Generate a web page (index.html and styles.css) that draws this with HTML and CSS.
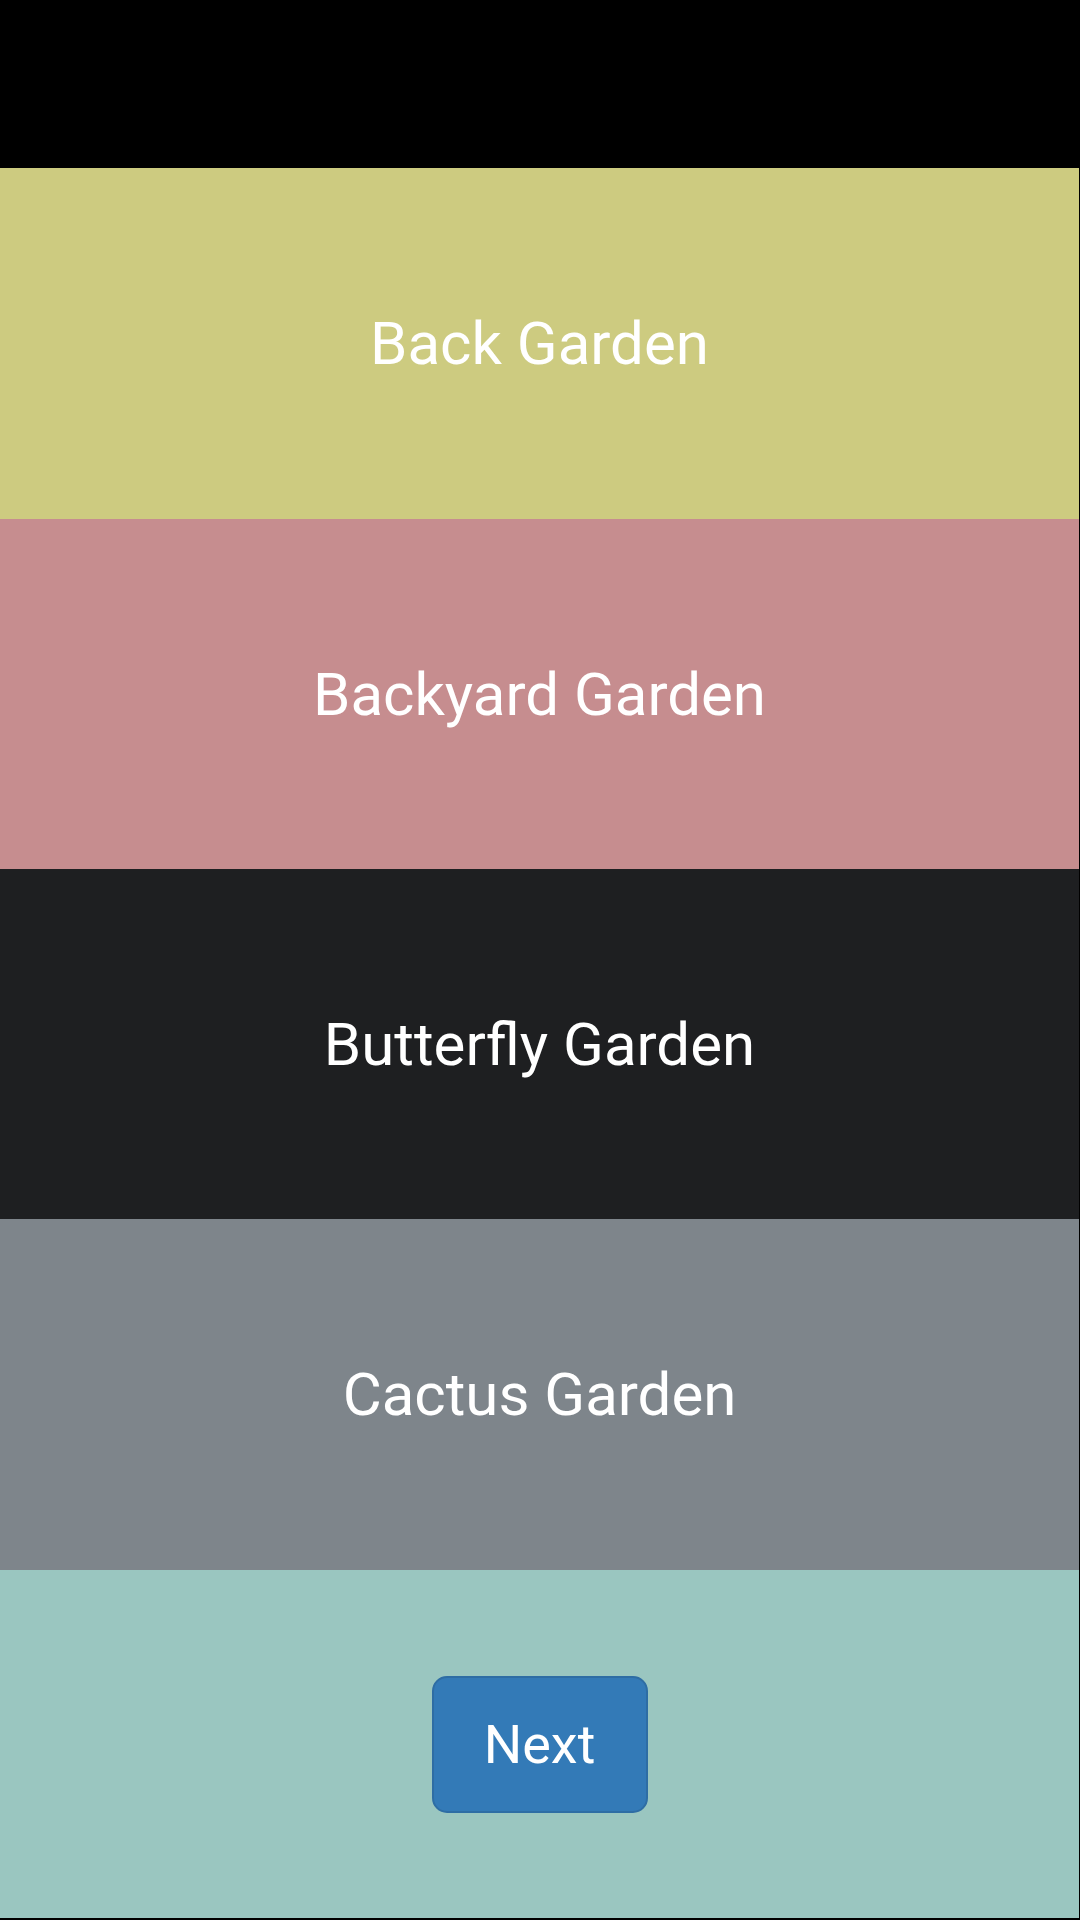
FILE: index.html
```html
<!DOCTYPE html>
<html lang="en">
<head>
    <meta charset="UTF-8">
    <meta name="viewport" content="width=device-width, initial-scale=1.0">
    <title>Gardens</title>
    <link rel="stylesheet" href="styles.css">
</head>
<body>
    <div class="status-bar"></div>
    <div class="garden-list">
        <div class="garden garden-back">Back Garden</div>
        <div class="garden garden-backyard">Backyard Garden</div>
        <div class="garden garden-butterfly">Butterfly Garden</div>
        <div class="garden garden-cactus">Cactus Garden</div>
        <div class="garden garden-footer">
            <button type="button" class="next-btn">Next</button>
        </div>
    </div>
</body>
</html>
```

FILE: styles.css
```css
body {
    margin: 0;
    padding: 0;
    background-color: #000;
    font-family: Roboto, "Liberation Sans", sans-serif;
    width: 1080px;
    height: 1920px;
    overflow: hidden;
}

.status-bar {
    height: 168px;
    background-color: #000;
}

.garden-list {
    width: 1079px;
    display: flex;
    flex-direction: column;
}

.garden {
    height: 350px;
    display: flex;
    align-items: center;
    justify-content: center;
    color: #fff;
    font-size: 60px;
}

.garden-back {
    background-color: #cdcb80;
    height: 351px;
}

.garden-backyard {
    background-color: #c68d8f;
}

.garden-butterfly {
    background-color: #1e1f21;
}

.garden-cactus {
    background-color: #7e858b;
    height: 351px;
}

.garden-footer {
    background-color: #9ac6c0;
    height: 348px;
}

.next-btn {
    width: 216px;
    height: 137px;
    background-color: #337ab7;
    border: 2px solid #2e6da4;
    border-radius: 15px;
    color: #fff;
    font-family: Roboto, "Liberation Sans", sans-serif;
    font-size: 54px;
    padding: 0;
    cursor: pointer;
}
```
